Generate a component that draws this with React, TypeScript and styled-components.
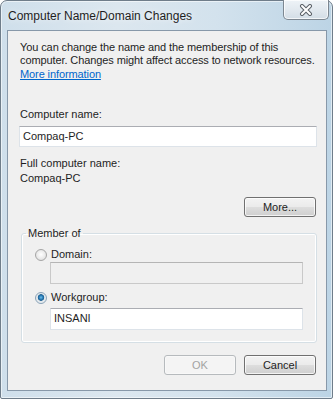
import React from 'react';
import styled, { createGlobalStyle } from 'styled-components';

const Global = createGlobalStyle`
  html, body { margin: 0; padding: 0; background: #ffffff; }
  body { font-family: "Liberation Sans", Arial, sans-serif; -webkit-font-smoothing: antialiased; }
`;

const Window = styled.div`
  box-sizing: border-box;
  width: 333px;
  height: 399px;
  border: 1px solid #6f7d8a;
  border-radius: 7px 7px 2px 2px;
  background: linear-gradient(90deg, #cfdfeb 0%, #dce7ef 35%, #d3e2ed 65%, #bcd4e5 100%);
  display: flex;
  flex-direction: column;
  padding: 0 5px 7px 6px;
  box-shadow: inset 0 0 0 1px rgba(255, 255, 255, 0.55);
`;

const TitleBar = styled.div`
  height: 29px;
  display: flex;
  align-items: flex-start;
  justify-content: space-between;
`;

const Title = styled.div`
  font-size: 12px;
  line-height: 15px;
  color: #1e1e1e;
  padding: 8px 0 0 1px;
  text-shadow: 0 0 6px rgba(255, 255, 255, 0.9);
`;

const CloseButton = styled.div`
  box-sizing: border-box;
  width: 46px;
  height: 20px;
  margin-top: -1px;
  margin-right: -2px;
  border: 1px solid #7d8791;
  border-top: none;
  border-radius: 0 0 5px 5px;
  background: linear-gradient(180deg, #eef3f7 0%, #e2e9ef 50%, #d3dde6 100%);
  box-shadow: inset 0 0 0 1px rgba(255, 255, 255, 0.7);
  display: flex;
  align-items: center;
  justify-content: center;
`;

const Client = styled.div`
  flex: 1;
  border: 1px solid #8798a9;
  background: #f0f0f0;
  display: flex;
  flex-direction: column;
  padding: 10px 9px 0 11px;
  font-size: 11px;
  line-height: 13px;
  color: #1e1e1e;
`;

const Desc = styled.div`
  padding-left: 1px;
  white-space: nowrap;
  letter-spacing: -0.1px;
`;

const Link = styled.a`
  display: block;
  margin-top: 1px;
  color: #0066cc;
  text-decoration: underline;
`;

const Label = styled.div<{ $mt: number }>`
  margin-top: ${(p) => p.$mt}px;
  padding-left: 1px;
`;

const TextBox = styled.div<{ $mt: number; $disabled?: boolean; $ml?: number; $h?: number }>`
  box-sizing: border-box;
  height: ${(p) => p.$h ?? 21}px;
  margin-top: ${(p) => p.$mt}px;
  margin-left: ${(p) => p.$ml ?? 0}px;
  border: 1px solid ${(p) => (p.$disabled ? '#c9c9c9' : '#dde3e9')};
  border-top-color: ${(p) => (p.$disabled ? '#b5b5b5' : '#abadb3')};
  background: ${(p) => (p.$disabled ? '#f0f0f0' : '#ffffff')};
  padding: 3px 0 0 3px;
  font-size: 11px;
  line-height: 13px;
  color: #1e1e1e;
`;

const ButtonRow = styled.div<{ $mt: number }>`
  display: flex;
  justify-content: flex-end;
  gap: 8px;
  margin-top: ${(p) => p.$mt}px;
  padding-right: 1px;
`;

const Button = styled.div<{ $disabled?: boolean }>`
  box-sizing: border-box;
  width: 72px;
  height: 20px;
  border: 1px solid ${(p) => (p.$disabled ? '#b6babd' : '#707070')};
  border-radius: 3px;
  background: ${(p) =>
    p.$disabled
      ? '#f4f4f4'
      : 'linear-gradient(180deg, #f3f3f3 0%, #ebebeb 48%, #dddddd 52%, #cfcfcf 100%)'};
  box-shadow: inset 0 0 0 1px ${(p) => (p.$disabled ? '#f8f8f8' : 'rgba(255,255,255,0.75)')};
  color: ${(p) => (p.$disabled ? '#a3a3a3' : '#1e1e1e')};
  font-size: 11px;
  line-height: 18px;
  text-align: center;
`;

const Group = styled.fieldset`
  margin: 10px 0 0 2px;
  padding: 0 13px 12px 13px;
  border: 1px solid #d5dfe5;
  border-radius: 3px;
  box-shadow: inset 0 0 0 1px #ffffff;
  display: flex;
  flex-direction: column;
`;

const Legend = styled.legend`
  margin-left: -9px;
  padding: 0 2px;
  font-size: 11px;
  line-height: 13px;
`;

const RadioRow = styled.div<{ $mt: number }>`
  display: flex;
  align-items: center;
  gap: 4px;
  margin-top: ${(p) => p.$mt}px;
  height: 13px;
`;

const Radio = styled.span<{ $checked?: boolean }>`
  box-sizing: border-box;
  width: 12px;
  height: 12px;
  border-radius: 50%;
  border: 1px solid ${(p) => (p.$checked ? '#8aa3b8' : '#a5a5a5')};
  background: ${(p) =>
    p.$checked
      ? 'radial-gradient(circle at 50% 45%, #6fc0ea 0%, #2a7db8 25%, #1c5f91 40%, #dfe6eb 48%, #f4f4f4 100%)'
      : 'radial-gradient(circle at 50% 45%, #ffffff 0%, #eeeeee 45%, #d9d9d9 100%)'};
  flex: none;
`;

export default function App() {
  return (
    <>
      <Global />
      <Window>
        <TitleBar>
          <Title>Computer Name/Domain Changes</Title>
          <CloseButton>
            <svg width="14" height="12" viewBox="0 0 14 12">
              <path d="M3 2 L11 10 M11 2 L3 10" stroke="#5b6168" strokeWidth="4" strokeLinecap="round" />
              <path d="M3 2 L11 10 M11 2 L3 10" stroke="#ffffff" strokeWidth="2" strokeLinecap="round" />
            </svg>
          </CloseButton>
        </TitleBar>
        <Client>
          <Desc>
            You can change the name and the membership of this
            <br />
            computer. Changes might affect access to network resources.
            <Link href="#">More information</Link>
          </Desc>
          <Label $mt={27}>Computer name:</Label>
          <TextBox $mt={5}>Compaq-PC</TextBox>
          <Label $mt={10}>Full computer name:</Label>
          <Label $mt={2}>Compaq-PC</Label>
          <ButtonRow $mt={12}>
            <Button>More...</Button>
          </ButtonRow>
          <Group>
            <Legend>Member of</Legend>
            <RadioRow $mt={8}>
              <Radio />
              <span>Domain:</span>
            </RadioRow>
            <TextBox $mt={1} $ml={15} $h={22} $disabled />
            <RadioRow $mt={7}>
              <Radio $checked />
              <span>Workgroup:</span>
            </RadioRow>
            <TextBox $mt={4} $ml={15} $h={22}>INSANI</TextBox>
          </Group>
          <ButtonRow $mt={12}>
            <Button $disabled>OK</Button>
            <Button>Cancel</Button>
          </ButtonRow>
        </Client>
      </Window>
    </>
  );
}
